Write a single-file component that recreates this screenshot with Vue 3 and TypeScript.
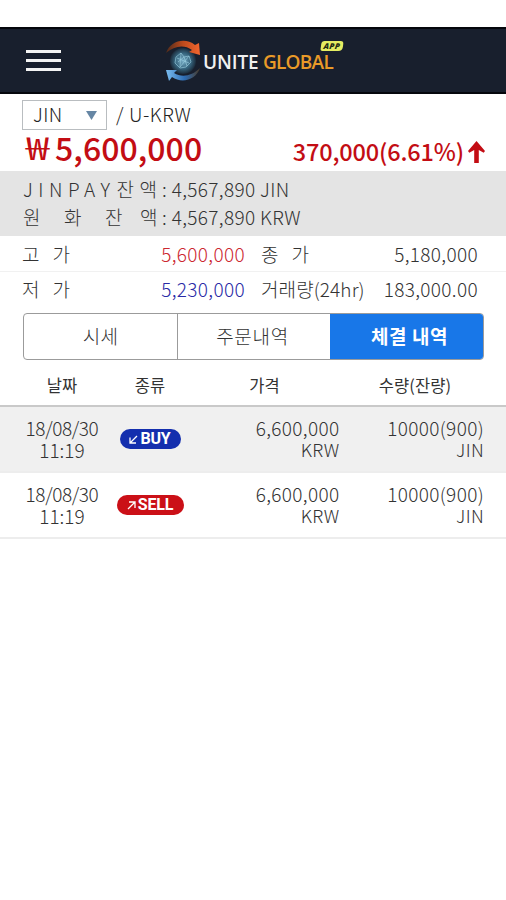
<script setup lang="ts">
interface Trade {
  date: string
  time: string
  side: 'BUY' | 'SELL'
  price: string
  amount: string
}

const trades: Trade[] = [
  { date: '18/08/30', time: '11:19', side: 'BUY', price: '6,600,000', amount: '10000(900)' },
  { date: '18/08/30', time: '11:19', side: 'SELL', price: '6,600,000', amount: '10000(900)' },
]
const tabs: string[] = ['시세', '주문내역', '체결 내역']
const activeTab = 2
</script>

<template>
  <main class="screen">
    <header class="topbar">
      <button class="menu" aria-label="메뉴"><i></i><i></i><i></i></button>
      <div class="brand">
        <svg class="emblem" width="36" height="42" viewBox="0 0 36 42">
          <defs>
            <linearGradient id="orange" x1="0" x2="1"><stop offset="0" stop-color="#4b2a1c" /><stop offset=".5" stop-color="#bd4a1c" /><stop offset="1" stop-color="#f2662f" /></linearGradient>
            <linearGradient id="blue" x1="0" x2="1"><stop offset="0" stop-color="#7abdf0" /><stop offset=".55" stop-color="#2d6cb4" /><stop offset="1" stop-color="#4a3a27" /></linearGradient>
            <radialGradient id="globe"><stop offset="0" stop-color="#77adc6" /><stop offset=".6" stop-color="#37667f" /><stop offset="1" stop-color="#1b2b3b" /></radialGradient>
          </defs>
          <circle cx="18" cy="21" r="13" fill="url(#globe)" />
          <path d="M11 17l5-4 3 4 5-1 2 6-5 5-6 1-5-5zM13 22l6-5 3 9M16 13l-1 14 9-11M12 18l12 5" fill="none" stroke="#9bcee0" stroke-width=".8" opacity=".8" />
          <path d="M1 13C5 1 20-3 30 5l4-2 1 12-11-3 3-2C19 4 9 6 1 13z" fill="url(#orange)" />
          <path d="M35 28c-4 12-18 16-28 9l-3 4L1 30l11 0-3 3c8 5 18 3 26-5z" fill="url(#blue)" />
        </svg>
        <span class="unite">UNITE</span><span class="global">GLOBAL</span>
        <span class="app-tag">APP</span>
      </div>
    </header>

    <section class="quote">
      <div class="pair">
        <div class="select"><span>JIN</span><svg width="11" height="9" viewBox="0 0 11 9"><path d="M0 0h11L5.5 9z" fill="#6686a4" /></svg></div>
        <span class="market">/ U-KRW</span>
      </div>
      <div class="price-line">
        <strong class="price"><span class="won">₩</span>5,600,000</strong>
        <span class="change">370,000(6.61%)</span>
        <svg class="up" width="17" height="22" viewBox="0 0 17 22"><path d="M8.500 0L17 10l-1.300 1.800L10.800 9V22H6.200V9L1.300 11.800 0 10z" fill="#c30d14" /></svg>
      </div>
    </section>

    <section class="balances">
      <div class="balance"><span class="label jinpay">JINPAY<span class="kr">잔액</span></span><span>: 4,567,890 JIN</span></div>
      <div class="balance"><span class="label won-label"><b>원</b><b>화</b><b>잔</b><b>액</b></span><span>: 4,567,890 KRW</span></div>
    </section>

    <section class="stats">
      <div class="stat-row">
        <span class="name"><b>고</b><b>가</b></span><span class="val high">5,600,000</span>
        <span class="name second"><b>종</b><b>가</b></span><span class="val last">5,180,000</span>
      </div>
      <div class="stat-row">
        <span class="name"><b>저</b><b>가</b></span><span class="val low">5,230,000</span>
        <span class="volume">거래량(24hr)</span><span class="val last">183,000.00</span>
      </div>
    </section>

    <nav class="tabs">
      <button v-for="(tab, i) in tabs" :key="tab" class="tab" :class="{ active: i === activeTab }">{{ tab }}</button>
    </nav>

    <section class="trades">
      <div class="head"><span>날짜</span><span>종류</span><span>가격</span><span>수량(잔량)</span></div>
      <div v-for="trade in trades" :key="trade.side" class="trade" :class="trade.side.toLowerCase()">
        <div class="when"><span class="date">{{ trade.date }}</span><span>{{ trade.time }}</span></div>
        <div class="side">
          <span class="badge">
            <svg v-if="trade.side === 'BUY'" width="9" height="9" viewBox="0 0 9 9"><path d="M8 1L1.500 7.500M1 2.500V8h6" /></svg>
            <svg v-else width="9" height="9" viewBox="0 0 9 9"><path d="M1 8l6.500-6.500M2 1h6v6" /></svg>
            <span>{{ trade.side }}</span>
          </span>
        </div>
        <div class="num"><span>{{ trade.price }}</span><small>KRW</small></div>
        <div class="num"><span>{{ trade.amount }}</span><small>JIN</small></div>
      </div>
    </section>
  </main>
</template>

<style>
body { margin: 0; background: #fff; }
</style>

<style scoped>
* { box-sizing: border-box; }
.screen { width: 506px; height: 900px; padding-top: 27px; overflow: hidden; background: #fff; color: #333; font-family: "Noto Sans CJK KR", sans-serif; font-size: 19px; font-weight: 300; letter-spacing: .35px; white-space: nowrap; }
button { margin: 0; padding: 0; border: 0; background: none; color: inherit; font: inherit; letter-spacing: inherit; }
b { font-weight: inherit; letter-spacing: 0; }
.topbar { height: 67px; display: flex; align-items: center; background: #181f2d; border-top: 2px solid #05070c; border-bottom: 2px solid #05070c; }
.menu { width: 35px; height: 21px; margin-left: 26px; display: flex; flex-direction: column; justify-content: space-between; }
.menu i { display: block; height: 3px; background: #f4f4f4; }
.brand { position: relative; display: flex; align-items: center; height: 42px; margin-left: 104px; font-family: "Open Sans", sans-serif; font-size: 19px; line-height: 24px; }
.unite { margin-left: 2px; width: 60px; padding-top: 2px; color: #f0f0f0; font-weight: 600; letter-spacing: -.1px; }
.global { padding-top: 2px; color: #e99a28; font-weight: 600; letter-spacing: -.75px; }
.app-tag { position: absolute; left: 156px; top: 1px; width: 22px; height: 10px; border-radius: 3px 3px 4px 2px; background: #e4ed62; color: #222b12; font: italic 800 8px/10px "Open Sans", sans-serif; text-align: center; transform: skewX(-8deg); }
.quote { height: 77px; padding: 6px 21px 0 22px; }
.pair { display: flex; height: 30px; align-items: center; color: #222; line-height: 26px; }
.pair span { padding-bottom: 2px; }
.select { width: 85px; height: 30px; padding: 0 9px 0 10px; border: 1px solid #b9bdc0; display: flex; align-items: center; justify-content: space-between; }
.market { margin-left: 9px; letter-spacing: .6px; }
.price-line { height: 38px; display: flex; align-items: center; color: #c30d14; }
.price { display: flex; align-items: center; margin: -4px 0 0 4px; font-size: 32px; line-height: 38px; font-weight: 500; }
.won { width: 29px; font-size: 31px; letter-spacing: 0; transform: scaleX(1.350); transform-origin: left; }
.won { font-weight: 400; }
.change { margin-left: auto; padding-top: 4px; font-size: 23.500px; line-height: 30px; font-weight: 500; letter-spacing: -.15px; }
.up { margin: 6px 0 0 4px; }
.price { letter-spacing: .05px; }
.balances { height: 65px; padding: 3px 0 4px 23px; background: #e4e4e4; }
.balance { display: flex; height: 28px; align-items: center; }
.label { width: 139px; }
.jinpay { display: flex; letter-spacing: 5.500px; }
.kr { margin-left: 1px; }
.won-label { display: flex; }
.won-label b { width: 41px; }
.won-label b:nth-child(3) { width: 35px; }
.won-label b:last-child { width: auto; }
.stat-row { height: 36px; display: flex; align-items: center; padding-left: 22px; border-bottom: 1px solid #f1f1f1; line-height: 28px; }
.stat-row:last-child { border-bottom: 0; padding-bottom: 2px; }
.name { width: 48px; display: flex; justify-content: space-between; }
.val { width: 175px; text-align: right; }
.second { margin-left: 16px; }
.volume { width: 104px; margin-left: 16px; letter-spacing: .1px; }
.last { width: auto; margin-left: auto; margin-right: 28px; }
.high { color: #cc2730; }
.low { color: #292aa6; }
.tabs { height: 47px; margin: 5px 22px 0 23px; display: grid; grid-template-columns: 153px 153px 1fr; border: 1px solid #9b9b9b; border-radius: 4px; overflow: hidden; }
.tab { padding-bottom: 2px; line-height: 28px; }
.tab + .tab { border-left: 1px solid #9b9b9b; }
.tab:nth-child(2) { padding-right: 3px; letter-spacing: .7px; }
.tab.active { margin: -1px -1px -1px 0; padding-left: 5px; border: 0; background: #1877e8; color: #fff; font-weight: 700; letter-spacing: .6px; }
.head, .trade { display: grid; }
.head { grid-template-columns: 124px 52px 177px 124px; height: 47px; padding-top: 5px; align-items: center; border-bottom: 2px solid #c9c9c9; font-size: 16.500px; font-weight: 400; text-align: center; letter-spacing: .1px; }
.trade { grid-template-columns: 124px 52px 163.500px 144.500px; height: 66px; padding-top: 10px; line-height: 22px; border-bottom: 2px solid #ededed; }
.trade.buy { background: #f0f0f0; }
.when { display: flex; flex-direction: column; align-items: center; line-height: 21.500px; letter-spacing: 0; }
.date { letter-spacing: -.4px; }
.num { display: flex; flex-direction: column; align-items: flex-end; line-height: 21.500px; }
.num small { font-size: 18px; }
.side { display: flex; justify-content: center; align-items: flex-start; padding-top: 12px; }
.badge { width: 61px; height: 20px; flex: none; display: flex; align-items: center; justify-content: center; gap: 2px; border-radius: 10px; background: #142fae; color: #fff; font: 700 16px/20px Roboto, sans-serif; letter-spacing: -.2px; }
.badge path { fill: none; stroke: currentColor; stroke-width: 1.300; }
.sell .badge { width: 67px; background: #cb1017; }
</style>
